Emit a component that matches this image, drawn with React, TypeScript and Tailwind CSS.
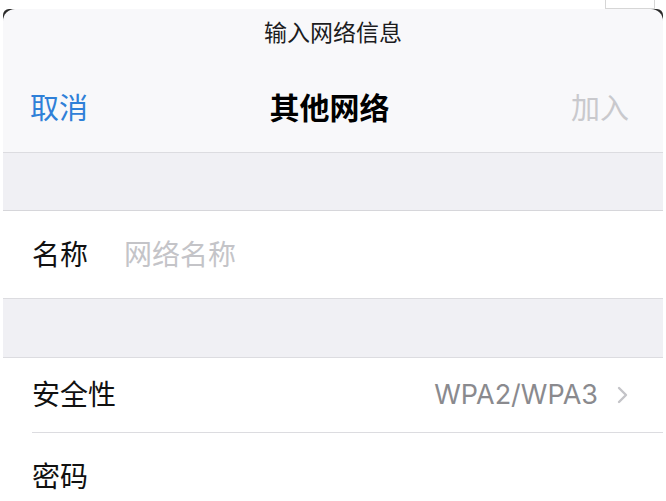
const FONT = "font-['Inter','Noto_Sans_CJK_SC',sans-serif]";

function Row({
  label,
  children,
  divider,
  height,
}: {
  label: string;
  children?: React.ReactNode;
  divider?: boolean;
  height: string;
}) {
  return (
    <div className={`bg-white pl-[29px] ${height}`}>
      <div
        className={`flex h-full items-center pr-[37px] ${divider ? "border-b border-[#dcdce0]" : ""}`}
      >
        <span className="text-[28px] text-[#111]">{label}</span>
        {children}
      </div>
    </div>
  );
}

export default function App() {
  return (
    <div className={`relative min-h-[501px] overflow-hidden bg-white pt-[9px] px-[3px] ${FONT}`}>
      {/* stray box from the original capture */}
      <div className="absolute right-[11px] top-0 h-[9px] w-[50px] border border-t-0 border-[#d6d6d6] bg-white" />

      <div className="rounded-t-[6px] bg-[#2a2a2a]">
        <div className="rounded-t-[12px] bg-[#f8f8fa]">
          {/* Header */}
          <div className="flex h-[48px] items-center justify-center">
            <span className="text-[23px] text-[#1c1c1e]">输入网络信息</span>
          </div>
          <div className="flex h-[96px] items-center justify-between border-b border-[#dcdce0] pl-[27px] pr-[34px] pt-[8px]">
            <button className="text-[29px] text-[#2f80d8]">取消</button>
            <span className="text-[30px] font-bold text-black">其他网络</span>
            <button className="text-[29px] text-[#c9c9cd]">加入</button>
          </div>
        </div>
      </div>

      <div className="h-[58px] border-b border-[#d6d6da] bg-[#f0f0f4]" />

      <Row label="名称" height="h-[87px]">
        <span className="ml-[36px] text-[28px] text-[#c4c4c8]">网络名称</span>
      </Row>

      <div className="h-[60px] border-y border-[#dcdce0] bg-[#f0f0f4]" />

      <Row label="安全性" divider height="h-[75px]">
        <span className="ml-auto text-[27px] text-[#8a8a8e]">WPA2/WPA3</span>
        <svg className="ml-[19px] -mr-[2px]" width="11" height="18" viewBox="0 0 11 18" fill="none">
          <path d="M2 2l7 7-7 7" stroke="#c4c4c8" strokeWidth="2.4" strokeLinecap="round" strokeLinejoin="round" />
        </svg>
      </Row>

      <Row label="密码" height="h-[87px]" />
    </div>
  );
}
